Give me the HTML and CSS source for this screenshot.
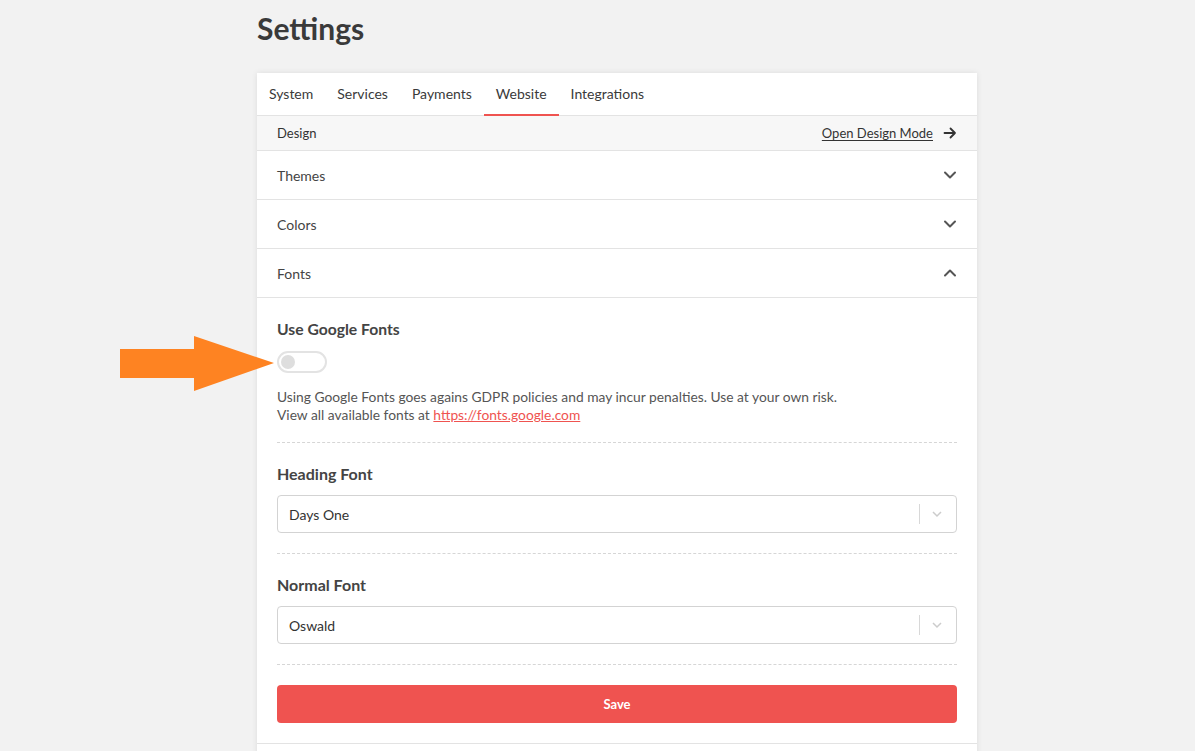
FILE: index.html
```html
<!DOCTYPE html>
<html lang="en">
<head>
<meta charset="utf-8">
<title>Settings</title>
<link rel="stylesheet" href="styles.css">
</head>
<body>
<div class="page">
  <h1 class="title">Settings</h1>
  <div class="card">
    <nav class="tabs">
      <a class="tab">System</a>
      <a class="tab">Services</a>
      <a class="tab">Payments</a>
      <a class="tab active">Website</a>
      <a class="tab">Integrations</a>
    </nav>
    <div class="design-bar">
      <span>Design</span>
      <a class="design-link">Open Design Mode
        <svg class="arrow-right" width="14" height="14" viewBox="0 0 14 14"><path d="M1.5 7h10.5M7.5 2.5 12 7l-4.5 4.5" fill="none" stroke="#333" stroke-width="1.8" stroke-linecap="round" stroke-linejoin="round"/></svg>
      </a>
    </div>
    <div class="row"><span>Themes</span><svg class="chev" width="14" height="14" viewBox="0 0 14 14"><path d="M2 4.5 7 9.5 12 4.5" fill="none" stroke="#555" stroke-width="2" stroke-linecap="round" stroke-linejoin="round"/></svg></div>
    <div class="row"><span>Colors</span><svg class="chev" width="14" height="14" viewBox="0 0 14 14"><path d="M2 4.5 7 9.5 12 4.5" fill="none" stroke="#555" stroke-width="2" stroke-linecap="round" stroke-linejoin="round"/></svg></div>
    <div class="row"><span>Fonts</span><svg class="chev" width="14" height="14" viewBox="0 0 14 14"><path d="M2 9.5 7 4.5 12 9.5" fill="none" stroke="#555" stroke-width="2" stroke-linecap="round" stroke-linejoin="round"/></svg></div>
    <div class="panel">
      <div class="group first">
        <div class="label label-toggle">Use Google Fonts</div>
        <div class="toggle"><div class="knob"></div></div>
        <p class="desc">Using Google Fonts goes agains GDPR policies and may incur penalties. Use at your own risk.<br>View all available fonts at <a class="link">https://fonts.google.com</a></p>
      </div>
      <div class="group">
        <div class="label">Heading Font</div>
        <div class="select"><span class="value">Days One</span><span class="indicator"><span class="sep"></span><svg width="12" height="12" viewBox="0 0 12 12"><path d="M2 4 6 8 10 4" fill="none" stroke="#ccc" stroke-width="1.5"/></svg></span></div>
      </div>
      <div class="group">
        <div class="label">Normal Font</div>
        <div class="select"><span class="value">Oswald</span><span class="indicator"><span class="sep"></span><svg width="12" height="12" viewBox="0 0 12 12"><path d="M2 4 6 8 10 4" fill="none" stroke="#ccc" stroke-width="1.5"/></svg></span></div>
      </div>
      <div class="group last">
        <button class="save">Save</button>
      </div>
    </div>
    <div class="row empty"></div>
  </div>
</div>
<svg class="pointer" width="160" height="60" viewBox="0 0 160 60"><polygon points="0,13 74,13 74,0 154,27 74,55 74,42 0,42" fill="#fe8322"/></svg>
</body>
</html>
```
FILE: styles.css
```css
html, body {
  margin: 0;
  padding: 0;
  background: #f2f2f2;
  font-family: Lato, "Open Sans", sans-serif;
  color: #333;
}
.page {
  margin-left: 257px;
  width: 720px;
}
.title {
  margin: 0;
  padding-top: 10px;
  height: 73px;
  box-sizing: border-box;
  font-size: 30px;
  line-height: 36px;
  font-weight: 700;
  color: #3a3a3a;
}
.card {
  background: #fff;
  box-shadow: 0 0 6px rgba(0, 0, 0, 0.09);
}
.tabs {
  display: flex;
  height: 43px;
  box-sizing: border-box;
  border-bottom: 1px solid #e3e3e3;
}
.tab {
  display: flex;
  align-items: center;
  padding: 0 12px 1px;
  font-size: 14px;
  color: #3a3a3a;
  border-bottom: 2px solid transparent;
  margin-bottom: -1px;
}
.tab.active {
  border-bottom-color: #ef5350;
}
.design-bar {
  display: flex;
  align-items: center;
  justify-content: space-between;
  height: 35px;
  box-sizing: border-box;
  padding: 0 20px;
  background: #f7f7f7;
  border-bottom: 1px solid #e3e3e3;
  font-size: 13px;
  color: #333;
}
.design-link {
  display: flex;
  align-items: center;
  gap: 10px;
  text-decoration: underline;
  text-underline-offset: 2px;
  color: #333;
}
.row {
  display: flex;
  align-items: center;
  justify-content: space-between;
  height: 49px;
  box-sizing: border-box;
  padding: 0 20px;
  border-bottom: 1px solid #e3e3e3;
  font-size: 14px;
  color: #444;
}
.row.empty {
  border-bottom: none;
  height: 20px;
}
.panel {
  padding: 0 20px;
  border-bottom: 1px solid #e3e3e3;
}
.group {
  padding: 20px 0;
  border-bottom: 1px dashed #d6d6d6;
}
.group.first {
  padding-bottom: 18px;
}
.group.last {
  border-bottom: none;
}
.label {
  font-size: 16px;
  line-height: 22px;
  font-weight: 700;
  color: #444;
  margin-bottom: 10px;
}
.label-toggle {
  margin-bottom: 11px;
  font-size: 15.7px;
}
.toggle {
  width: 50px;
  height: 22px;
  box-sizing: border-box;
  border: 2px solid #e3e3e3;
  border-radius: 11px;
  display: flex;
  align-items: center;
  padding-left: 2px;
}
.knob {
  width: 14px;
  height: 14px;
  border-radius: 50%;
  background: #dedede;
}
.desc {
  margin: 15px 0 0;
  font-size: 13.8px;
  line-height: 18px;
  color: #555;
}
.link {
  color: #ef5350;
  text-decoration: underline;
}
.select {
  display: flex;
  align-items: center;
  justify-content: space-between;
  height: 38px;
  box-sizing: border-box;
  border: 1px solid #d3d3d3;
  border-radius: 4px;
  padding-left: 11px;
  font-size: 14px;
  color: #333;
}
.indicator {
  display: flex;
  align-items: center;
  gap: 11px;
  padding-right: 13px;
}
.sep {
  width: 1px;
  height: 20px;
  background: #d8d8d8;
}
.save {
  display: block;
  width: 100%;
  height: 38px;
  border: none;
  border-radius: 4px;
  background: #ef5350;
  color: #fff;
  font-family: Lato, "Open Sans", sans-serif;
  font-size: 13px;
  font-weight: 700;
}
.pointer {
  position: absolute;
  left: 120px;
  top: 336px;
}
```
